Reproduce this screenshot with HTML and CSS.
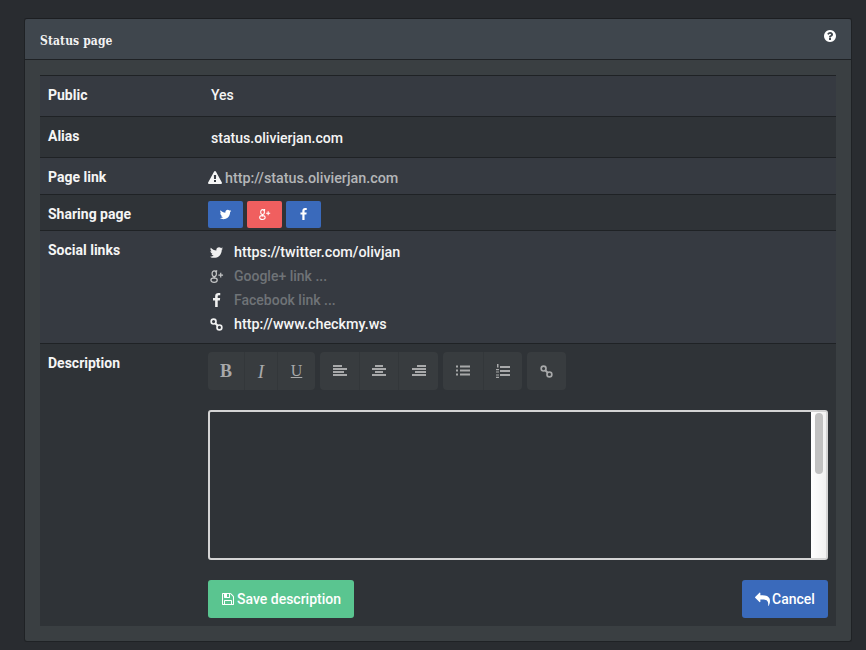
FILE: index.html
```html
<!DOCTYPE html>
<html lang="en">
<head>
<meta charset="utf-8">
<title>Status page</title>
<link rel="stylesheet" href="styles.css">
</head>
<body>
<svg class="defs" width="0" height="0" aria-hidden="true">
  <symbol id="i-tw" viewBox="0 0 1792 1792"><path d="M1684 408q-67 98-162 167 1 14 1 42 0 130-38 259.5t-115.5 248.5-184.5 210.5-258 146-323 54.5q-271 0-496-145 35 4 78 4 225 0 401-138-105-2-188-64.5t-114-159.5q33 5 61 5 43 0 85-11-112-23-185.5-111.5t-73.5-205.5v-4q68 38 146 41-66-44-105-115t-39-154q0-88 44-163 121 149 294.5 238.5t371.5 99.5q-8-38-8-74 0-134 94.5-228.5t228.5-94.5q140 0 236 102 109-21 205-78-37 115-142 182 90-10 183-47z"/></symbol>
  <symbol id="i-fb" viewBox="0 0 1792 1792"><path d="M1343 12v264h-157q-86 0-116 36t-30 108v189h293l-39 296h-254v759h-306v-759h-255v-296h255v-218q0-186 104-288.5t277-102.5q147 0 228 12z"/></symbol>
  <symbol id="i-gp" viewBox="0 0 16 16"><g fill="none" stroke="currentColor" stroke-width="1.3"><ellipse cx="5.6" cy="5" rx="2.3" ry="3"/><ellipse cx="5.4" cy="11.8" rx="3.4" ry="2.4"/><path d="M6 8c-1 1-.8 1.5 0 2.2M7 2h1.8M7.3 2.300c.6.500 .6 1 .6 1.500"/><path d="M10 6.500h5M12.500 4v5"/></g></symbol>
  <symbol id="i-link" viewBox="-1 -1 18 18"><g fill="none" stroke="currentColor" stroke-width="2"><circle cx="4.500" cy="4.500" r="2.900"/><circle cx="11.500" cy="11.500" r="2.900"/><path d="M6.500 6.500l3 3" stroke-width="2.400"/></g></symbol>
  <symbol id="i-q" viewBox="0 0 1792 1792"><path d="M1024 1376v-192q0-14-9-23t-23-9h-192q-14 0-23 9t-9 23v192q0 14 9 23t23 9h192q14 0 23-9t9-23zm256-672q0-88-55.500-163t-138.500-116-170-41q-243 0-371 213-15 24 8 42l132 100q7 6 19 6 16 0 25-12 53-68 86-92 34-24 86-24 48 0 85.500 26t37.500 59q0 38-20 61t-68 45q-63 28-115.500 86.500t-52.500 125.500v36q0 14 9 23t23 9h192q14 0 23-9t9-23q0-19 21.500-49.500t54.500-49.500q32-18 49-28.500t46-35 44.500-48 28-60.500 12.500-81zm384 192q0 209-103 385.500t-279.500 279.500-385.500 103-385.500-103-279.500-279.500-103-385.500 103-385.500 279.500-279.500 385.500-103 385.500 103 279.500 279.500 103 385.500z"/></symbol>
  <symbol id="i-warn" viewBox="0 0 1792 1792"><path d="M1024 1375v-190q0-14-9.500-23.500t-22.500-9.500h-192q-13 0-22.500 9.500t-9.500 23.500v190q0 14 9.500 23.500t22.500 9.500h192q13 0 22.500-9.500t9.500-23.500zm-2-374l18-459q0-12-10-19-13-11-24-11h-220q-11 0-24 11-10 7-10 21l17 457q0 10 10 16.500t24 6.500h185q14 0 23.500-6.500t10.500-16.500zm-14-934l768 1408q35 63-2 126-17 29-46.500 46t-63.500 17h-1536q-34 0-63.500-17t-46.500-46q-37-63-2-126l768-1408q17-31 47-49t65-18 65 18 47 49z"/></symbol>
  <symbol id="i-save" viewBox="0 0 1792 1792"><path d="M512 1536h768v-384h-768v384zm896 0h128v-896q0-14-10-38.500t-20-34.500l-281-281q-10-10-34-20t-39-10v416q0 40-28 68t-68 28h-576q-40 0-68-28t-28-68v-416h-128v1280h128v-416q0-40 28-68t68-28h832q40 0 68 28t28 68v416zm-384-928v-320q0-13-9.500-22.500t-22.500-9.500h-192q-13 0-22.500 9.500t-9.500 22.500v320q0 13 9.500 22.500t22.500 9.500h192q13 0 22.500-9.500t9.500-22.500zm640 32v928q0 40-28 68t-68 28h-1344q-40 0-68-28t-28-68v-1344q0-40 28-68t68-28h928q40 0 88 20t76 48l280 280q28 28 48 76t20 88z"/></symbol>
  <symbol id="i-undo" viewBox="0 0 1792 1792"><path d="M1792 1120q0 166-127 451-3 7-10.500 24t-13.500 30-13 22q-12 17-28 17-15 0-23.500-10t-8.500-25q0-9 2.500-26.500t2.500-23.500q5-68 5-123 0-101-17.500-181t-48.500-138.500-80-101-105.500-69.500-133-42.500-154-21.500-175.500-6h-224v256q0 26-19 45t-45 19-45-19l-512-512q-19-19-19-45t19-45l512-512q19-19 45-19t45 19 19 45v256h224q713 0 875 403 53 134 53 333z"/></symbol>
  <symbol id="i-left" viewBox="0 0 14 12"><path d="M0 0h9v2H0zM0 3h14v2H0zM0 6h11v2H0zM0 9h14v2H0z"/></symbol>
  <symbol id="i-center" viewBox="0 0 14 12"><path d="M3 0h8v2H3zM0 3h14v2H0zM3 6h8v2H3zM0 9h14v2H0z"/></symbol>
  <symbol id="i-right" viewBox="0 0 14 12"><path d="M5 0h9v2H5zM0 3h14v2H0zM3 6h11v2H3zM0 9h14v2H0z"/></symbol>
  <symbol id="i-ul" viewBox="0 0 14 12"><path d="M0 .5h2v2H0zM0 4.500h2v2H0zM0 8.500h2v2H0zM4 .5h10v2H4zM4 4.500h10v2H4zM4 8.500h10v2H4z"/></symbol>
  <symbol id="i-ol" viewBox="0 0 14 14"><path d="M4 2h10v2H4zM4 6h10v2H4zM4 10h10v2H4z"/><path d="M1 0h1.500v3.500H1zM0 5h3v1.200H0zM0 7.600h3v1H0zM0 10.500h3v1H0zM0 12.800h3V14H0z"/></symbol>
</svg>

<main class="panel">
  <header class="panel-head">
    <h1 class="panel-title">Status page</h1>
    <svg class="help"><use href="#i-q"/></svg>
  </header>
  <div class="panel-body">
    <div class="table">
      <div class="row row-a row-public">
        <div class="label">Public</div>
        <div class="value">Yes</div>
      </div>
      <div class="row row-b row-alias">
        <div class="label">Alias</div>
        <div class="value value-alias">status.olivierjan.com</div>
      </div>
      <div class="row row-a row-link">
        <div class="label">Page link</div>
        <div class="value value-link"><svg class="warn"><use href="#i-warn"/></svg><span class="muted-link">http://status.olivierjan.com</span></div>
      </div>
      <div class="row row-b row-share">
        <div class="label">Sharing page</div>
        <div class="value share-btns">
          <a class="share share-blue"><svg class="share-ico"><use href="#i-tw"/></svg></a>
          <a class="share share-red"><svg class="share-ico"><use href="#i-gp"/></svg></a>
          <a class="share share-blue"><svg class="share-ico"><use href="#i-fb"/></svg></a>
        </div>
      </div>
      <div class="row row-a row-social">
        <div class="label">Social links</div>
        <div class="value social-list">
          <div class="social"><svg class="social-ico"><use href="#i-tw"/></svg><span class="social-url">https://twitter.com/olivjan</span></div>
          <div class="social"><svg class="social-ico dim-ico"><use href="#i-gp"/></svg><span class="placeholder">Google+ link ...</span></div>
          <div class="social"><svg class="social-ico"><use href="#i-fb"/></svg><span class="placeholder">Facebook link ...</span></div>
          <div class="social"><svg class="social-ico"><use href="#i-link"/></svg><span class="social-url">http://www.checkmy.ws</span></div>
        </div>
      </div>
      <div class="row row-b row-desc">
        <div class="label">Description</div>
        <div class="value editor">
          <div class="toolbar">
            <div class="tool-group">
              <button class="tool tool-b">B</button>
              <button class="tool tool-i">I</button>
              <button class="tool tool-u">U</button>
            </div>
            <div class="tool-group">
              <button class="tool tool-w39"><svg class="tool-ico"><use href="#i-left"/></svg></button>
              <button class="tool tool-w39"><svg class="tool-ico"><use href="#i-center"/></svg></button>
              <button class="tool tool-w40"><svg class="tool-ico"><use href="#i-right"/></svg></button>
            </div>
            <div class="tool-group">
              <button class="tool tool-w40"><svg class="tool-ico"><use href="#i-ul"/></svg></button>
              <button class="tool tool-w39"><svg class="tool-ico tool-ol"><use href="#i-ol"/></svg></button>
            </div>
            <div class="tool-group">
              <button class="tool tool-w39"><svg class="tool-ico tool-link"><use href="#i-link"/></svg></button>
            </div>
          </div>
          <div class="textbox">
            <div class="textbox-area"></div>
            <div class="scroll-track"><div class="scroll-thumb"></div></div>
          </div>
          <div class="actions">
            <button class="btn btn-green"><svg class="btn-ico"><use href="#i-save"/></svg>Save description</button>
            <button class="btn btn-blue"><svg class="btn-ico btn-ico-undo"><use href="#i-undo"/></svg>Cancel</button>
          </div>
        </div>
      </div>
    </div>
  </div>
</main>
</body>
</html>
```

FILE: styles.css
```css
* { box-sizing: border-box; }
html, body { margin: 0; height: 100%; }
body {
  width: 866px;
  height: 650px;
  overflow: hidden;
  padding: 18px 14px 0 24px;
  background: #292c30;
  font-family: Roboto, "Liberation Sans", sans-serif;
  font-size: 14px;
  color: #fff;
}
.defs { position: absolute; }
svg { fill: currentColor; display: block; }

.panel {
  width: 828px;
  height: 624px;
  background: #3a3f42;
  border: 1px solid #1f2225;
  border-top-color: #1c1e21;
  border-radius: 3px;
}
.panel-head {
  height: 41px;
  padding: 0 14px 0 15px;
  display: flex;
  justify-content: space-between;
  background: #3f464d;
  border-bottom: 1px solid #1f2225;
  border-radius: 3px 3px 0 0;
}
.panel-title {
  margin: 0;
  font: bold 12px/45px "DejaVu Serif Condensed", "DejaVu Serif", serif;
  letter-spacing: 0.1px;
  color: #f2f2f2;
}
.help { width: 14px; height: 14px; margin-top: 10px; }

.panel-body { padding: 15px 15px 0; }
.table { border-top: 1px solid #1f2225; }
.row {
  display: flex;
  border-bottom: 1px solid #1f2225;
}
.row-a { background: #363a41; }
.row-b { background: #2f3337; }
.label {
  flex: 0 0 168px;
  padding-left: 8px;
  font-weight: 700;
  font-size: 14px;
  line-height: 16px;
  color: #f5f5f5;
}
.value { flex: 1; font-weight: 500; font-size: 14px; line-height: 16px; color: #f5f5f5; padding-left: 3px; }

.row-public { height: 41px; }
.row-public .label, .row-public .value { padding-top: 11px; }
.row-alias { height: 41px; }
.row-alias .label { padding-top: 11px; }
.value-alias { padding-top: 13px; font-size: 14.1px; }
.row-link { height: 37px; }
.row-link .label { padding-top: 11px; }
.value-link { padding-top: 11px; padding-left: 0; display: flex; align-items: center; align-self: flex-start; gap: 3px; }
.warn { width: 14px; height: 14px; color: #f5f5f5; }
.muted-link { color: #b4b6b8; font-size: 14.35px; margin-top: 2px; }

.row-share { height: 36px; }
.row-share .label { padding-top: 11px; }
.share-btns { display: flex; gap: 4px; padding: 6px 0 0; }
.share {
  width: 35px;
  height: 27px;
  border-radius: 2px;
  display: flex;
  align-items: center;
  justify-content: center;
  color: #fff;
}
.share-blue { background: #3a6abb; }
.share-red { background: #f05f5f; }
.share-ico { width: 13px; height: 13px; }

.row-social { height: 113px; }
.row-social .label { padding-top: 11px; }
.social-list { padding: 9px 0 0; }
.social { display: flex; align-items: center; height: 24px; gap: 10px; padding-left: 1px; }
.social-ico { width: 15px; height: 15px; color: #f0f0f0; }
.dim-ico { color: #c4c5c6; }
.social-url { font-size: 14.35px; margin-top: 2px; }
.placeholder { color: #6f7377; font-size: 14px; }

.row-desc { height: 282px; border-bottom: 0; }
.row-desc .label { padding-top: 11px; }
.editor { padding: 8px 8px 0 0; }
.toolbar { display: flex; gap: 5px; }
.tool-group { display: flex; height: 38px; background: #383c3f; border-radius: 4px; overflow: hidden; }
.tool {
  border: 0;
  padding: 0;
  background: transparent;
  border-left: 1px solid #33373a;
  width: 39px;
  height: 38px;
  color: #a8a9aa;
  display: flex;
  align-items: center;
  justify-content: center;
  font: 16px/1 "Liberation Serif", serif;
}
.tool:first-child { border-left: 0; }
.tool-b { width: 36px; font-weight: 700; font-size: 18px; }
.tool-i { width: 33px; font-style: italic; font-size: 19px; }
.tool-u { width: 38px; text-decoration: underline; font-size: 16px; }
.tool-w39 { width: 39px; }
.tool-w40 { width: 40px; }
.tool-ico { width: 14px; height: 12px; }
.tool-ol { height: 14px; }
.tool-link { width: 15px; height: 15px; }

.textbox {
  display: flex;
  height: 150px;
  margin-top: 20px;
  border: 2px solid #d4d4d4;
  border-radius: 3px;
  background: #2f3337;
}
.textbox-area { flex: 1; }
.scroll-track { width: 15px; padding: 1px 3px 0 4px; background: linear-gradient(90deg, #fff, #f1f1f1); }
.scroll-thumb { height: 61px; background: #c1c1c1; border-radius: 4px; }

.actions { display: flex; justify-content: space-between; margin-top: 20px; }
.btn {
  height: 38px;
  border: 0;
  border-radius: 3px;
  color: #fff;
  display: flex;
  align-items: center;
  justify-content: center;
  gap: 2px;
  font: 500 14px/1 Roboto, "Liberation Sans", sans-serif;
}
.btn-green { width: 146px; background: #5ac590; }
.btn-blue { width: 86px; background: #3a6abb; }
.btn-ico { width: 14px; height: 14px; }
.btn-ico-undo { width: 15px; height: 15px; }
```
